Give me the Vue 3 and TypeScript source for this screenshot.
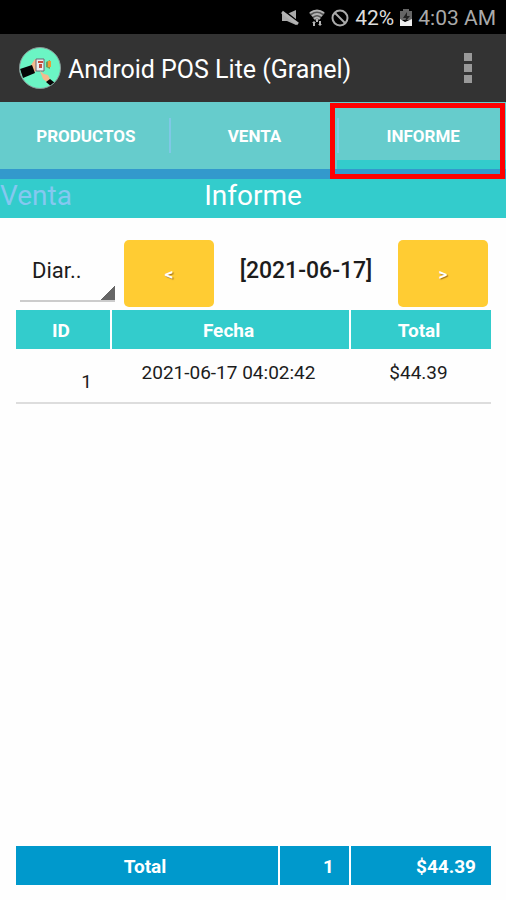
<script setup lang="ts">
import { ref } from 'vue'

interface Sale {
  id: number
  date: string
  total: string
}

const tabs: string[] = ['PRODUCTOS', 'VENTA', 'INFORME']
const activeTab = ref('INFORME')
const period = ref('Diar..')
const sales: Sale[] = [{ id: 1, date: '2021-06-17 04:02:42', total: '$44.39' }]
</script>

<template>
  <div class="screen">
    <div class="status">
      <svg class="mute" viewBox="0 0 18 18" aria-hidden="true">
        <path d="M1 5h5l9-4v15l-9-4H1z" fill="#aaa" />
        <path d="M2 1l15 12" stroke="#000" stroke-width="2" />
        <path d="M1 3l16 12" stroke="#b4b4b4" stroke-width="3" />
      </svg>
      <svg class="wifi" viewBox="0 0 16 18" aria-hidden="true">
        <path d="M0 4q8-6 16 0L9 12H7z" fill="#555" />
        <g fill="none" stroke="#b4b4b4" stroke-width="2">
          <path d="M1 4q7-5 14 0M3 7q5-4 10 0M5 10q3-3 6 0" />
        </g>
        <path d="M7 10h2v3H7zM3 14l2-2 2 2H6v3H4v-3zM9 15h1v-3h2v3h1l-2 2z" fill="#b4b4b4" />
      </svg>
      <svg class="blocked" viewBox="0 0 18 18" aria-hidden="true">
        <circle cx="9" cy="9" r="7.5" fill="none" stroke="#aaa" stroke-width="2" />
        <path d="M4 4l10 10" stroke="#aaa" stroke-width="2" />
      </svg>
      <span class="charge">42%</span>
      <svg class="battery" viewBox="0 0 12 18" aria-hidden="true">
        <path d="M3 0h6v2h3v9H0V2h3z" fill="#666" />
        <path d="M0 10l5 3 7-3v7H0z" fill="#eee" />
        <path d="M7 3L3 9h3l-1 4 5-6H7z" fill="#222" />
      </svg>
      <span class="clock">4:03 AM</span>
    </div>

    <header class="bar">
      <svg class="logo" viewBox="0 0 44 44" aria-hidden="true">
        <defs>
          <clipPath id="disc"><circle cx="22" cy="22" r="20" /></clipPath>
        </defs>
        <circle cx="22" cy="22" r="20.5" fill="#6bf5c4" stroke="#8a9a98" />
        <g clip-path="url(#disc)">
          <path d="M13 19l4-6 3 1v9l-4 4-3 1z" fill="#f5b98d" />
          <path d="M2 23l12-4 3 8-12 5z" fill="#050505" />
          <path d="M18 13h8v12h-8z" fill="#e9edf0" stroke="#6b6670" />
          <path d="M20 15h5v2h-5zM21 18h3v4h-3z" fill="#c74d3e" />
          <path d="M28 16l4-2v9l-4-2z" fill="#789a55" />
          <path d="M30 15h3v6h-3z" fill="#ed9a34" />
          <path d="M22 25l4 3 4 1 3 6-3 2-5-4z" fill="#f5b98d" />
          <path d="M28 36l4-3 5 4-3 4z" fill="#050505" />
        </g>
      </svg>
      <h1>Android POS Lite (Granel)</h1>
      <button class="more" type="button" aria-label="Más opciones">
        <i></i><i></i><i></i>
      </button>
    </header>

    <nav class="tabs">
      <button
        v-for="tab in tabs"
        :key="tab"
        type="button"
        class="tab"
        :class="{ active: tab === activeTab }"
        @click="activeTab = tab"
      >
        {{ tab }}
      </button>
      <span class="highlight"></span>
    </nav>

    <div class="pager">
      <span class="previous">Venta</span>
      <h2>Informe</h2>
    </div>

    <main>
      <div class="filters">
        <select v-model="period" aria-label="Periodo">
          <option>Diar..</option>
        </select>
        <button class="step" type="button">&lt;</button>
        <strong class="day">[2021-06-17]</strong>
        <button class="step" type="button">&gt;</button>
      </div>

      <table class="sales">
        <colgroup>
          <col class="c-id" />
          <col />
          <col class="c-total" />
        </colgroup>
        <thead>
          <tr>
            <th>ID</th>
            <th>Fecha</th>
            <th>Total</th>
          </tr>
        </thead>
        <tbody>
          <tr v-for="sale in sales" :key="sale.id">
            <td class="id">{{ sale.id }}</td>
            <td>{{ sale.date }}</td>
            <td>{{ sale.total }}</td>
          </tr>
        </tbody>
      </table>

      <table class="summary">
        <colgroup>
          <col />
          <col class="c-count" />
          <col class="c-total" />
        </colgroup>
        <tbody>
          <tr>
            <th>Total</th>
            <td>1</td>
            <td>$44.39</td>
          </tr>
        </tbody>
      </table>
    </main>
  </div>
</template>

<style>
body {
  margin: 0;
  background: #fefefe;
}
</style>

<style scoped>
.screen {
  display: flex;
  flex-direction: column;
  min-height: 100vh;
  font-family: Roboto, "Liberation Sans", sans-serif;
  color: #1c1c1c;
}

button,
select {
  font: inherit;
  border: 0;
  padding: 0;
}

.status {
  display: flex;
  align-items: center;
  justify-content: flex-end;
  gap: 6px;
  height: 34px;
  padding: 2px 10px 0 0;
  box-sizing: border-box;
  background: #000;
  color: #aaa;
  font-size: 21px;
}

.mute,
.blocked {
  width: 18px;
  height: 18px;
}

.mute {
  margin-right: 4px;
}

.wifi {
  width: 16px;
  height: 18px;
}

.battery {
  width: 12px;
  height: 18px;
}

.charge {
  color: #ddd;
}

.bar {
  display: flex;
  align-items: center;
  height: 68px;
  padding: 0 34px 0 18px;
  background: #333;
}

.logo {
  width: 44px;
  height: 44px;
  margin-right: 6px;
}

h1,
h2 {
  margin: 0;
  font-weight: 400;
  color: #fff;
  white-space: nowrap;
}

h1 {
  flex: 1;
  padding-top: 2px;
  font-size: 25px;
}

.more {
  display: flex;
  flex-direction: column;
  gap: 3px;
  background: none;
}

.more i {
  width: 8px;
  height: 8px;
  background: #999;
}

.tabs {
  position: relative;
  display: flex;
  background: #66cccc;
  border-bottom: 10px solid #3399cc;
}

.tab {
  position: relative;
  flex: 1;
  height: 67px;
  padding-left: 3px;
  background: none;
  color: #fff;
  font-size: 17px;
  font-weight: 700;
}

.tab + .tab::before {
  content: "";
  position: absolute;
  left: 0;
  top: 16px;
  bottom: 16px;
  width: 2px;
  background: #80c8e6;
}

.tab.active {
  box-shadow: inset 0 -9px #33cccc;
}

.highlight {
  position: absolute;
  top: 1px;
  right: 1px;
  bottom: -10px;
  width: 175px;
  box-sizing: border-box;
  border: 5px solid #fe0000;
  pointer-events: none;
}

.pager {
  display: grid;
  grid-template-columns: 1fr auto 1fr;
  align-items: center;
  height: 39px;
  padding-bottom: 6px;
  box-sizing: border-box;
  background: #33cccc;
  font-size: 28px;
}

.previous {
  color: #85c8f0;
}

h2 {
  font-size: 28px;
}

main {
  display: flex;
  flex: 1;
  flex-direction: column;
  padding: 22px 15px 15px 16px;
}

.filters {
  display: flex;
  align-items: center;
  height: 67px;
  padding: 0 3px 0 4px;
  margin-bottom: 3px;
}

select {
  appearance: none;
  align-self: flex-start;
  width: 95px;
  height: 62px;
  margin-right: 9px;
  padding-left: 12px;
  border-bottom: 2px solid #ccc;
  border-radius: 0;
  background: linear-gradient(135deg, transparent 50%, #666 50%) right bottom / 16px 16px no-repeat border-box;
  color: #1c1c1c;
  font-size: 22px;
}

.step {
  width: 90px;
  height: 67px;
  border-radius: 5px;
  background: #ffcc33;
  color: #fff;
  font-size: 17px;
  font-weight: 700;
  text-shadow: 1px 1px 1px #a07020;
}

.day {
  flex: 1;
  padding-bottom: 6px;
  text-align: center;
  font-size: 23px;
  font-weight: 500;
}

table {
  width: 100%;
  table-layout: fixed;
  border-collapse: collapse;
  font-size: 19px;
}

th,
td {
  padding: 2px 4px 0 0;
  box-sizing: border-box;
  text-align: center;
}

th + th,
.summary td {
  border-left: 2px solid #fff;
}

.c-id {
  width: 95px;
}

.c-total {
  width: 141px;
}

.c-count {
  width: 71px;
}

.sales th {
  height: 39px;
  background: #33cccc;
  color: #fff;
  font-weight: 700;
}

.sales tbody td {
  height: 54px;
  padding-bottom: 8px;
  border-bottom: 2px solid #ddd;
}

.sales tbody .id {
  padding: 12px 19px 0 0;
  text-align: right;
}

.summary {
  margin-top: auto;
}

.summary th,
.summary td {
  height: 39px;
  background: #0099cc;
  color: #fff;
  font-weight: 700;
}

.summary td {
  padding-right: 15px;
  text-align: right;
}
</style>
